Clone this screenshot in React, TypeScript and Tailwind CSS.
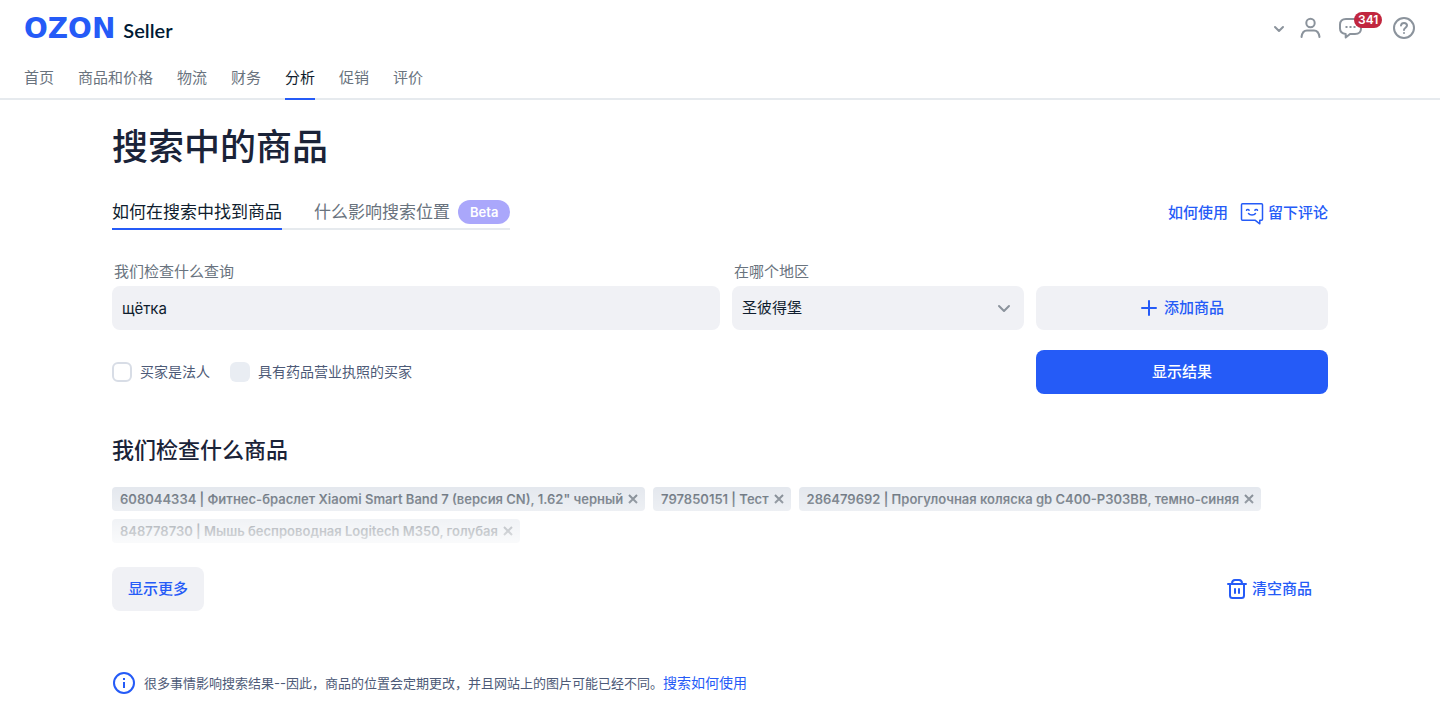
import { useState } from 'react';

const navItems = ['首页', '商品和价格', '物流', '财务', '分析', '促销', '评价'];

const initialProducts = [
  { id: '608044334', name: 'Фитнес-браслет Xiaomi Smart Band 7 (версия CN), 1.62" черный' },
  { id: '797850151', name: 'Тест' },
  { id: '286479692', name: 'Прогулочная коляска gb C400-P303BB, темно-синяя' },
  { id: '848778730', name: 'Мышь беспроводная Logitech M350, голубая' },
];

function Header() {
  return (
    <header className="border-b-2 border-[#e6eaee]">
      <div className="flex h-14 items-center justify-between px-6">
        <a href="#" className="flex items-baseline gap-2 pt-0.5">
          <span className="font-['DejaVu_Sans',sans-serif] text-[28px] leading-8 font-bold text-[#255bf7]">OZON</span>
          <span className="font-[Lato,sans-serif] text-xl leading-8 font-semibold text-[#001a34]">Seller</span>
        </a>

        <div className="flex items-center text-[#8b939c]">
          <button aria-label="账户" className="mr-3">
            <svg width="14" height="14" viewBox="0 0 14 14" fill="none" stroke="currentColor" strokeWidth="2" strokeLinecap="round" strokeLinejoin="round">
              <path d="M3 6l4 4 4-4" />
            </svg>
          </button>
          <button aria-label="个人资料" className="mr-4">
            <svg width="24" height="24" viewBox="0 0 24 24" fill="none" stroke="currentColor" strokeWidth="2" strokeLinecap="round">
              <circle cx="12.500" cy="7" r="4.200" />
              <path d="M3.500 21c.6-4.600 2.300-6.500 5.500-6.500h7c3.200 0 4.900 1.900 5.500 6.500" />
            </svg>
          </button>
          <button aria-label="消息" className="relative mr-7">
            <svg width="26" height="24" viewBox="0 0 26 24" fill="none" stroke="currentColor" strokeWidth="2" strokeLinejoin="round">
              <path d="M8 3h9c4 0 6 1.900 6 5.500v4c0 3.600-2 5.500-6 5.500h-5l-4.300 3.500V18C4 17.600 2 15.700 2 12.500v-4C2 4.900 4 3 8 3z" />
              <path d="M7.500 11h2M11.500 11h2M15.500 11h2" />
            </svg>
            <span className="absolute -top-1 left-4 rounded-full bg-[#c1263f] px-1 text-[12px] leading-4 font-semibold text-white">341</span>
          </button>
          <button aria-label="帮助">
            <svg width="24" height="24" viewBox="0 0 24 24" fill="none" stroke="currentColor" strokeWidth="2" strokeLinecap="round" strokeLinejoin="round">
              <circle cx="12" cy="12" r="10" />
              <path d="M9 9.500C9.200 7.900 10.400 7 12 7c1.700 0 3 1 3 2.600 0 2.200-3 2.100-3 4.400" />
              <path d="M12 17v.1" />
            </svg>
          </button>
        </div>
      </div>

      <nav className="-mb-0.5 flex gap-6 px-6 text-[15px] leading-5 text-[#69737e]">
        {navItems.map((item) => (
          <a
            key={item}
            href="#"
            className={
              item === '分析'
                ? 'border-b-2 border-[#255bf7] pt-3 pb-2.5 text-[#0f1d2e]'
                : 'border-b-2 border-transparent pt-3 pb-2.5'
            }
          >
            {item}
          </a>
        ))}
      </nav>
    </header>
  );
}

function Tabs() {
  return (
    <div className="flex items-start justify-between">
      <div className="flex gap-8 border-b-2 border-[#e6eaee] text-[17px] leading-6">
        <button className="-mb-0.5 border-b-2 border-[#255bf7] pb-1 text-[#0f1d2e]">如何在搜索中找到商品</button>
        <button className="flex items-center gap-2 pb-1 text-[#69737e]">
          什么影响搜索位置
          <span className="rounded-full bg-[#aaa7fb] px-3 text-[13px] leading-6 font-semibold text-white">Beta</span>
        </button>
      </div>

      <div className="flex items-center gap-3 text-[15px] leading-[26px] font-medium text-[#255bf7]">
        <a href="#">如何使用</a>
        <a href="#" className="flex items-center gap-1">
          <svg width="24" height="24" viewBox="0 0 24 24" fill="none" stroke="currentColor" strokeWidth="1.500" strokeLinecap="round" strokeLinejoin="round">
            <path d="M2.500 2.700h19q1 0 1 1v14.500q0 1-1 1h-1.700v3.600L15 19.200H2.500q-1 0-1-1V3.700q0-1 1-1z" />
            <path d="M6.500 9.300c.4-1.200 2.200-1.200 2.600 0M14.900 9.300c.4-1.200 2.200-1.200 2.600 0M8.500 12.500c1.500 2 5.500 2 7 0" />
          </svg>
          留下评论
        </a>
      </div>
    </div>
  );
}

function SearchForm() {
  const [query, setQuery] = useState('щётка');

  return (
    <form onSubmit={(e) => e.preventDefault()}>
      <div className="flex items-end gap-3">
        <div className="w-1/2">
          <label htmlFor="query" className="block px-0.5 pb-1 text-[15px] leading-5 text-[#69737e]">
            我们检查什么查询
          </label>
          <input
            id="query"
            value={query}
            onChange={(e) => setQuery(e.target.value)}
            className="h-11 w-full rounded-lg bg-[#f0f1f5] px-2.5 text-[15px] text-[#0f1d2e]"
          />
        </div>
        <div className="flex-1">
          <label htmlFor="region" className="block px-0.5 pb-1 text-[15px] leading-5 text-[#69737e]">
            在哪个地区
          </label>
          <div className="relative">
            <select id="region" className="h-11 w-full appearance-none rounded-lg bg-[#f0f1f5] px-2.5 text-[15px] text-[#0f1d2e]">
              <option>圣彼得堡</option>
            </select>
            <svg className="pointer-events-none absolute top-3.5 right-3 text-[#8b939c]" width="16" height="16" viewBox="0 0 16 16" fill="none" stroke="currentColor" strokeWidth="2" strokeLinecap="round" strokeLinejoin="round">
              <path d="M3 6l5 5 5-5" />
            </svg>
          </div>
        </div>
        <button type="button" className="flex h-11 flex-1 items-center justify-center gap-1.5 rounded-lg bg-[#f0f1f5] text-[15px] font-medium text-[#255bf7]">
          <svg width="18" height="18" viewBox="0 0 18 18" fill="none" stroke="currentColor" strokeWidth="2" strokeLinecap="round">
            <path d="M9 2v14M2 9h14" />
          </svg>
          添加商品
        </button>
      </div>

      <div className="mt-5 flex items-center gap-3">
        <div className="flex w-1/2 items-center gap-5 text-sm text-[#4d5a77]">
          <label className="flex items-center gap-2">
            <input type="checkbox" className="size-5 appearance-none rounded-md border-2 border-[#d8dde6] bg-white" />
            买家是法人
          </label>
          <label className="flex items-center gap-2">
            <input type="checkbox" disabled className="size-5 appearance-none rounded-md bg-[#e9edf3]" />
            具有药品营业执照的买家
          </label>
        </div>
        <div className="flex-1" />
        <button type="submit" className="h-11 flex-1 rounded-lg bg-[#255bf7] text-[15px] font-medium text-white">
          显示结果
        </button>
      </div>
    </form>
  );
}

function Products() {
  const [products, setProducts] = useState(initialProducts);

  return (
    <section className="mt-10">
      <h2 className="text-[22px] leading-8 font-medium text-[#1a2338]">我们检查什么商品</h2>

      <div className="relative mt-[21px]">
        <ul className="flex flex-wrap gap-2">
          {products.map((p) => (
            <li key={p.id} className="flex h-6 items-center gap-1 rounded-sm bg-[#e4e8ee] pr-1.5 pl-2 text-[13px] leading-6 font-semibold text-[#626c77]">
              {p.id} | {p.name}
              <button aria-label={`删除 ${p.id}`} onClick={() => setProducts(products.filter((x) => x.id !== p.id))}>
                <svg width="12" height="12" viewBox="0 0 12 12" fill="none" stroke="#78818b" strokeWidth="2">
                  <path d="M2 2l8 8M10 2l-8 8" />
                </svg>
              </button>
            </li>
          ))}
        </ul>
        {/* fade out at the bottom of the list */}
        <div className="pointer-events-none absolute inset-0 bg-gradient-to-b from-white/0 to-white/80" />
      </div>

      <div className="mt-6 flex items-center justify-between text-[15px] font-medium text-[#255bf7]">
        <button className="h-11 rounded-lg bg-[#f0f1f5] px-4">显示更多</button>
        <button className="flex h-11 items-center gap-1 px-4" onClick={() => setProducts([])}>
          <svg width="22" height="22" viewBox="0 0 22 22" fill="none" stroke="currentColor" strokeWidth="2" strokeLinecap="round" strokeLinejoin="round">
            <path d="M2 6h18M4 6v11.500Q4 20 6.500 20h9q2.500 0 2.500-2.500V6M6 5.500Q6 2 9 2h4q3 0 3 3.500M9 11v4M13 11v4" />
          </svg>
          清空商品
        </button>
      </div>
    </section>
  );
}

export default function App() {
  return (
    <div className="min-h-screen bg-white font-[Inter,'Noto_Sans_CJK_SC',sans-serif]">
      <Header />
      <main className="px-28 pt-6 pb-2">
        <h1 className="text-4xl leading-[46px] font-medium text-[#1a2338]">搜索中的商品</h1>
        <div className="mt-[30px]">
          <Tabs />
        </div>
        <div className="mt-8">
          <SearchForm />
        </div>
        <Products />

        <div className="mt-15 flex items-center gap-2 text-[13px] text-[#4d5a77]">
          <svg className="text-[#255bf7]" width="24" height="24" viewBox="0 0 24 24" fill="none" stroke="currentColor" strokeWidth="2">
            <circle cx="12" cy="12" r="10" />
            <path d="M12 11v6M12 7v2" />
          </svg>
          <p>
            很多事情影响搜索结果--因此，商品的位置会定期更改，并且网站上的图片可能已经不同。
            <a href="#" className="text-sm text-[#255bf7]">搜索如何使用</a>
          </p>
        </div>
      </main>
    </div>
  );
}
